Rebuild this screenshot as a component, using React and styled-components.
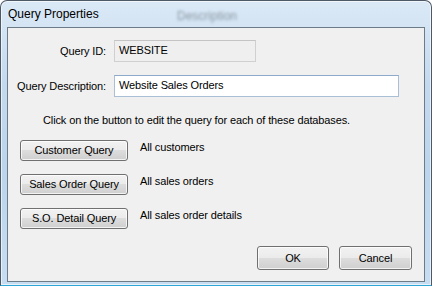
import styled, { createGlobalStyle } from "styled-components";

const GlobalStyle = createGlobalStyle`
    html, body {
        margin: 0;
        padding: 0;
        background: #ffffff;
    }
    * {
        box-sizing: border-box;
    }
`

const Window = styled.div`
    position: relative;
    width: 432px;
    height: 286px;
    display: flex;
    flex-direction: column;
    padding: 0 6px 3px 6px;
    border: 1px solid #4d5966;
    border-bottom-color: #2ea6d6;
    border-radius: 7px 7px 0 0;
    background: linear-gradient(to bottom, #dbe9f6 0%, #c3d9ee 30%, #bcd5ec 60%, #c7ddf1 100%);
    box-shadow: inset 0 0 0 1px rgba(255, 255, 255, 0.6);
    overflow: hidden;
`

const TitleBar = styled.div`
    position: relative;
    height: 26px;
    display: flex;
    align-items: center;
    padding-left: 1px;
    font-family: "Liberation Sans", Arial, sans-serif;
    font-size: 12px;
    color: #000000;
`

const Reflection = styled.span`
    position: absolute;
    left: ${props => props.left}px;
    top: 8px;
    font-family: "Liberation Sans", Arial, sans-serif;
    font-size: 12px;
    color: rgba(40, 50, 60, 0.45);
    filter: blur(1.4px);
`

const Client = styled.div`
    flex: 1;
    border: 1px solid #6d7a88;
    background: #f0f0f0;
    padding: 12px 0 0 0;
    font-family: "Liberation Sans", Arial, sans-serif;
    font-size: 11px;
    letter-spacing: -0.12px;
    color: #000000;
`

const FormGrid = styled.div`
    display: grid;
    grid-template-columns: 98px 1fr;
    column-gap: 8px;
    row-gap: 13px;
    align-items: center;
`

const Label = styled.div`
    text-align: right;
`

const Field = styled.div`
    width: ${props => props.width}px;
    height: 22px;
    display: flex;
    align-items: center;
    padding: 0 4px 2px 4px;
    background: ${props => (props.readOnly ? "#efefef" : "#ffffff")};
    border: 1px solid ${props => (props.readOnly ? "#d0d0d0" : "#a9bfd6")};
    border-top-color: ${props => (props.readOnly ? "#c4c4c4" : "#8eaacb")};
`

const Instructions = styled.div`
    margin-top: 17px;
    padding-left: 35px;
    line-height: 13px;
`

const QueryList = styled.div`
    margin-top: 13px;
    padding-left: 12px;
    display: flex;
    flex-direction: column;
    gap: 13px;
`

const QueryRow = styled.div`
    display: flex;
    align-items: flex-start;
    gap: 12px;
`

const QueryDesc = styled.div`
    padding-top: 1px;
    line-height: 12px;
`

const Button = styled.button`
    width: ${props => props.width}px;
    height: ${props => props.height}px;
    padding: 0 0 1px 0;
    font-family: "Liberation Sans", Arial, sans-serif;
    font-size: 11px;
    letter-spacing: -0.12px;
    color: #000000;
    border: 1px solid #707070;
    border-radius: 3px;
    background: linear-gradient(to bottom, #f2f2f2 0%, #ebebeb 49%, #dddddd 50%, #cfcfcf 100%);
    box-shadow: inset 0 0 0 1px rgba(255, 255, 255, 0.75);
    cursor: pointer;
`

const Footer = styled.div`
    margin-top: 17px;
    padding-right: 12px;
    display: flex;
    justify-content: flex-end;
    gap: 10px;
`

const queries = [
    { name: "Customer Query", desc: "All customers" },
    { name: "Sales Order Query", desc: "All sales orders" },
    { name: "S.O. Detail Query", desc: "All sales order details" },
];

const App = () => {
    return (
        <>
            <GlobalStyle />
            <Window>
                <TitleBar>
                    Query Properties
                    <Reflection left={170}>Description</Reflection>
                </TitleBar>
                <Client>
                    <FormGrid>
                        <Label>Query ID:</Label>
                        <Field readOnly width={142}>WEBSITE</Field>
                        <Label>Query Description:</Label>
                        <Field width={285}>Website Sales Orders</Field>
                    </FormGrid>
                    <Instructions>
                        Click on the button to edit the query for each of these databases.
                    </Instructions>
                    <QueryList>
                        {queries.map((q) => (
                            <QueryRow key={q.name}>
                                <Button width={108} height={21}>{q.name}</Button>
                                <QueryDesc>{q.desc}</QueryDesc>
                            </QueryRow>
                        ))}
                    </QueryList>
                    <Footer>
                        <Button width={72} height={24}>OK</Button>
                        <Button width={73} height={24}>Cancel</Button>
                    </Footer>
                </Client>
            </Window>
        </>
    );
}

export default App;
